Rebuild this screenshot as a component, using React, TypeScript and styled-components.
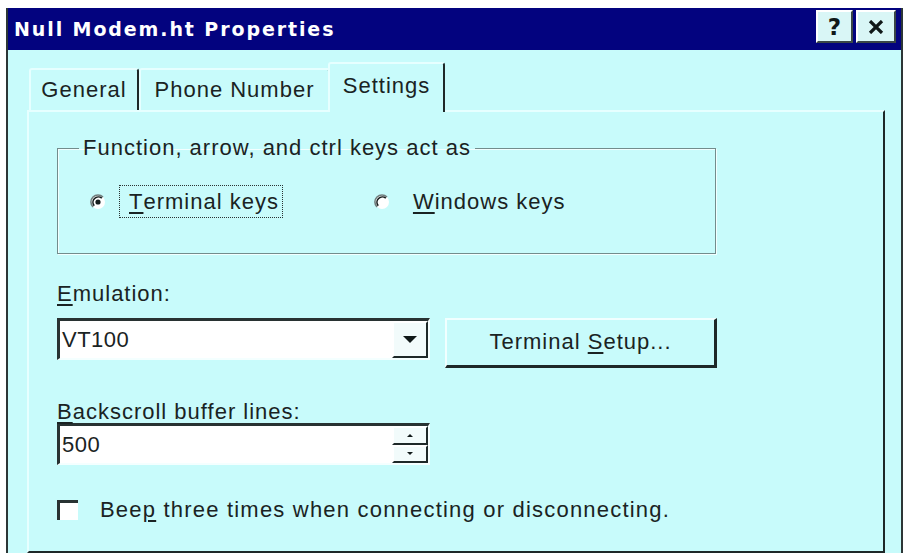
import React from "react";
import styled, { createGlobalStyle } from "styled-components";

const GlobalStyle = createGlobalStyle`
  html, body {
    margin: 0;
    padding: 0;
    background: #ffffff;
  }
  body {
    font-family: "Liberation Sans", Arial, sans-serif;
    font-size: 22px;
    letter-spacing: 1px;
    color: #1a2323;
    overflow: hidden;
  }
`;

const Dialog = styled.div`
  margin: 8px 0 0 6px;
  width: 897px;
  box-sizing: border-box;
  border-left: 2px solid #2c3636;
  border-right: 2px solid #2c3636;
  background: #c8fbfb;
`;

const TitleBar = styled.div`
  height: 42px;
  background: #03037f;
  display: flex;
  align-items: flex-start;
  justify-content: space-between;
  padding: 0 5px 0 6px;
`;

const Title = styled.span`
  font-family: "DejaVu Sans", Verdana, sans-serif;
  font-weight: bold;
  font-size: 19px;
  letter-spacing: 1.9px;
  color: #ffffff;
  line-height: 42px;
`;

const CaptionButtons = styled.div`
  display: flex;
  gap: 3px;
  margin-top: 2px;
`;

const CaptionButton = styled.div<{ $w: number }>`
  width: ${({ $w }) => $w}px;
  height: 33px;
  box-sizing: border-box;
  background: #d9f6f6;
  border-top: 2px solid #ffffff;
  border-left: 2px solid #ffffff;
  border-right: 2px solid #3a4646;
  border-bottom: 2px solid #3a4646;
  display: flex;
  align-items: center;
  justify-content: center;
  font-family: "DejaVu Sans", Verdana, sans-serif;
  font-weight: bold;
  font-size: 23px;
  letter-spacing: 0;
  color: #101818;
`;

const Body = styled.div`
  padding: 0 16px 0 19px;
`;

const TabStrip = styled.div`
  height: 60px;
  display: flex;
  align-items: flex-end;
  padding-left: 2px;
`;

const Tab = styled.div<{ $w: number; $active?: boolean }>`
  position: relative;
  z-index: ${({ $active }) => ($active ? 2 : 1)};
  width: ${({ $w }) => $w}px;
  height: ${({ $active }) => ($active ? 50 : 42)}px;
  margin: ${({ $active }) => ($active ? "0 0 -2px -2px" : "0")};
  box-sizing: border-box;
  border-top: 2px solid #e6ffff;
  border-left: 2px solid #e6ffff;
  border-right: 2px solid #1e2828;
  border-radius: 3px 3px 0 0;
  background: #c8fbfb;
  display: flex;
  align-items: center;
  justify-content: center;
  padding-bottom: ${({ $active }) => ($active ? 4 : 0)}px;
`;

const Panel = styled.div`
  height: 443px;
  box-sizing: border-box;
  border-top: 2px solid #e6ffff;
  border-left: 2px solid #e6ffff;
  border-right: 2px solid #1e2828;
  border-bottom: 2px solid #1e2828;
  padding: 23px 0 0 28px;
`;

const GroupBox = styled.fieldset`
  margin: 0;
  width: 659px;
  box-sizing: border-box;
  border: 1px solid #738c8c;
  box-shadow: inset 1px 1px 0 #f2ffff, 1px 1px 0 #f2ffff;
  padding: 24px 0 35px 0;
`;

const Legend = styled.legend`
  margin-left: 21px;
  padding: 0 4px;
  line-height: 26px;
`;

const RadioRow = styled.div`
  display: flex;
  align-items: center;
  padding-left: 32px;
`;

const RadioOption = styled.label<{ $gapLeft?: number }>`
  display: flex;
  align-items: center;
  gap: 13px;
  margin-left: ${({ $gapLeft }) => $gapLeft ?? 0}px;
`;

const OptionText = styled.span<{ $focus?: boolean }>`
  box-sizing: border-box;
  height: 33px;
  display: flex;
  align-items: center;
  padding: 0 3px 0 9px;
  border: 1px dotted ${({ $focus }) => ($focus ? "#2a3333" : "transparent")};
`;

const Mn = styled.span`
  text-decoration: underline;
  text-underline-offset: 3px;
`;

const FieldLabel = styled.div<{ $top: number; $bottom: number }>`
  line-height: 22px;
  margin: ${({ $top }) => $top}px 0 ${({ $bottom }) => $bottom}px;
`;

const ControlRow = styled.div`
  display: flex;
  align-items: flex-start;
  gap: 15px;
`;

const Field = styled.div`
  width: 373px;
  height: 42px;
  box-sizing: border-box;
  background: #ffffff;
  border-top: 3px solid #283232;
  border-left: 3px solid #283232;
  border-right: 2px solid #f4ffff;
  border-bottom: 2px solid #f4ffff;
  display: flex;
  align-items: stretch;
`;

const FieldValue = styled.span`
  flex: 1;
  display: flex;
  align-items: center;
  padding-left: 2px;
  letter-spacing: 0.5px;
`;

const DropButton = styled.div`
  width: 36px;
  box-sizing: border-box;
  background: #f2fbfb;
  border-top: 2px solid #ffffff;
  border-left: 2px solid #ffffff;
  border-right: 2px solid #1e2828;
  border-bottom: 2px solid #1e2828;
  display: flex;
  align-items: center;
  justify-content: center;
`;

const SpinButtons = styled.div`
  width: 36px;
  display: flex;
  flex-direction: column;
`;

const SpinHalf = styled(DropButton)`
  width: 100%;
  flex: 1;
`;

const PushButton = styled.div`
  width: 272px;
  height: 50px;
  box-sizing: border-box;
  border-top: 2px solid #f0ffff;
  border-left: 2px solid #f0ffff;
  border-right: 3px solid #1e2828;
  border-bottom: 3px solid #1e2828;
  display: flex;
  align-items: center;
  justify-content: center;
  padding-bottom: 2px;
`;

const CheckRow = styled.label`
  margin-top: 32px;
  display: flex;
  align-items: center;
  gap: 22px;
`;

const CheckBox = styled.span`
  width: 21px;
  height: 20px;
  box-sizing: border-box;
  background: #ffffff;
  border-top: 3px solid #283232;
  border-left: 3px solid #283232;
`;

const CheckText = styled.span`
  letter-spacing: 1.2px;
`;

const Radio = ({ checked }: { checked?: boolean }) => (
  <svg width="16" height="16" viewBox="0 0 16 16">
    <circle cx="8" cy="8" r="7" fill="#ffffff" />
    <path d="M13 3 A7 7 0 0 0 3 13" stroke="#707e7e" strokeWidth="1.6" fill="none" />
    <path d="M11.8 4.2 A5.4 5.4 0 0 0 4.2 11.8" stroke="#141c1c" strokeWidth="1.6" fill="none" />
    {checked && <circle cx="8" cy="8" r="2.6" fill="#141c1c" />}
  </svg>
);

const CloseGlyph = () => (
  <svg width="16" height="14" viewBox="0 0 16 14">
    <path d="M2 1 L14 13 M14 1 L2 13" stroke="#101818" strokeWidth="3.2" />
  </svg>
);

const DownArrow = ({ w, h }: { w: number; h: number }) => (
  <svg width={w} height={h} viewBox={`0 0 ${w} ${h}`}>
    <polygon points={`0,0 ${w},0 ${w / 2},${h}`} fill="#101818" />
  </svg>
);

const UpArrow = ({ w, h }: { w: number; h: number }) => (
  <svg width={w} height={h} viewBox={`0 0 ${w} ${h}`}>
    <polygon points={`0,${h} ${w},${h} ${w / 2},0`} fill="#101818" />
  </svg>
);

export default function App() {
  return (
    <>
      <GlobalStyle />
      <Dialog>
        <TitleBar>
          <Title>Null Modem.ht Properties</Title>
          <CaptionButtons>
            <CaptionButton $w={37}>?</CaptionButton>
            <CaptionButton $w={40}>
              <CloseGlyph />
            </CaptionButton>
          </CaptionButtons>
        </TitleBar>
        <Body>
          <TabStrip>
            <Tab $w={110}>General</Tab>
            <Tab $w={191}>Phone Number</Tab>
            <Tab $w={117} $active>
              Settings
            </Tab>
          </TabStrip>
          <Panel>
            <GroupBox>
              <Legend>Function, arrow, and ctrl keys act as</Legend>
              <RadioRow>
                <RadioOption>
                  <Radio checked />
                  <OptionText $focus>
                    <Mn>T</Mn>erminal keys
                  </OptionText>
                </RadioOption>
                <RadioOption $gapLeft={91}>
                  <Radio />
                  <OptionText>
                    <Mn>W</Mn>indows keys
                  </OptionText>
                </RadioOption>
              </RadioRow>
            </GroupBox>

            <FieldLabel $top={29} $bottom={13}>
              <Mn>E</Mn>mulation:
            </FieldLabel>
            <ControlRow>
              <Field>
                <FieldValue>VT100</FieldValue>
                <DropButton>
                  <DownArrow w={14} h={7} />
                </DropButton>
              </Field>
              <PushButton>
                <span>
                  Terminal <Mn>S</Mn>etup...
                </span>
              </PushButton>
            </ControlRow>

            <FieldLabel $top={33} $bottom={0}>
              <Mn>B</Mn>ackscroll buffer lines:
            </FieldLabel>
            <Field>
              <FieldValue>500</FieldValue>
              <SpinButtons>
                <SpinHalf>
                  <UpArrow w={6} h={3} />
                </SpinHalf>
                <SpinHalf>
                  <DownArrow w={6} h={3} />
                </SpinHalf>
              </SpinButtons>
            </Field>

            <CheckRow>
              <CheckBox />
              <CheckText>
                Bee<Mn>p</Mn> three times when connecting or disconnecting.
              </CheckText>
            </CheckRow>
          </Panel>
        </Body>
      </Dialog>
    </>
  );
}
